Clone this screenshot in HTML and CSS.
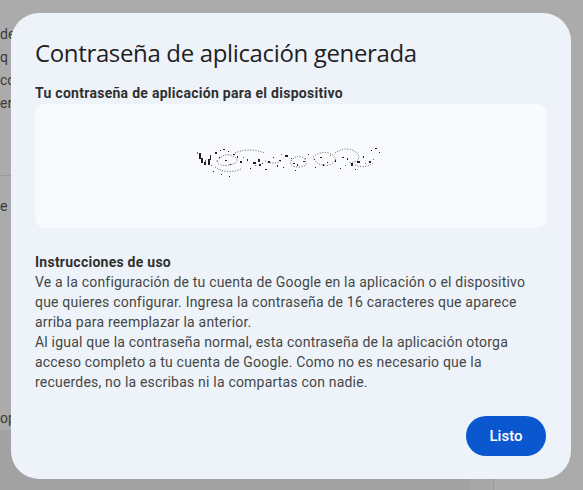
FILE: index.html
```html
<!DOCTYPE html>
<html lang="es">
<head>
<meta charset="utf-8">
<title>Contraseña de aplicación generada</title>
<link rel="stylesheet" href="styles.css">
</head>
<body>
<div class="page">
  <div class="bg-col">
    <p class="bg-line">de</p>
    <p class="bg-line">q</p>
    <p class="bg-line">co</p>
    <p class="bg-line">er</p>
    <div class="bg-divider"></div>
    <p class="bg-line l5">e<span class="mark"></span></p>
    <div class="bg-spacer"></div>
    <p class="bg-line">op</p>
  </div>
  <div class="bg-bottom">
    <div class="bg-b1"></div>
    <div class="bg-b2"></div>
    <div class="bg-b3"></div>
  </div>
</div>

<div class="dialog" role="dialog">
  <h1 class="title">Contraseña de aplicación generada</h1>
  <h2 class="subtitle">Tu contraseña de aplicación para el dispositivo</h2>
  <div class="pw-box">
    <svg class="pw-noise" width="190" height="45" viewBox="0 0 190 45" aria-label="contraseña">
      <g fill="#1f1f1f">
        <rect x="4" y="8" width="2" height="6"/><rect x="6" y="13" width="2" height="5"/><rect x="9" y="17" width="2" height="3"/>
        <rect x="13" y="14" width="2" height="6"/><rect x="15" y="10" width="1" height="5"/><rect x="20" y="7" width="2" height="2"/>
        <rect x="25" y="5" width="1" height="1"/><rect x="28" y="4" width="2" height="1"/><rect x="33" y="6" width="1" height="1"/>
        <rect x="38" y="9" width="2" height="1"/><rect x="42" y="11" width="1" height="2"/><rect x="24" y="12" width="1" height="1"/>
        <rect x="30" y="15" width="2" height="1"/><rect x="35" y="19" width="1" height="1"/><rect x="45" y="16" width="2" height="2"/>
        <rect x="52" y="14" width="1" height="2"/><rect x="58" y="17" width="3" height="2"/><rect x="63" y="14" width="2" height="3"/>
        <rect x="67" y="18" width="1" height="1"/><rect x="73" y="16" width="2" height="2"/><rect x="78" y="12" width="1" height="1"/>
        <rect x="84" y="15" width="2" height="1"/><rect x="90" y="10" width="3" height="2"/><rect x="96" y="13" width="1" height="1"/>
        <rect x="102" y="19" width="1" height="2"/><rect x="108" y="16" width="2" height="1"/><rect x="113" y="9" width="1" height="1"/>
        <rect x="119" y="14" width="1" height="1"/><rect x="125" y="12" width="2" height="1"/><rect x="132" y="17" width="1" height="1"/>
        <rect x="140" y="15" width="1" height="2"/><rect x="147" y="12" width="2" height="1"/><rect x="156" y="18" width="2" height="3"/>
        <rect x="162" y="16" width="3" height="2"/><rect x="168" y="11" width="1" height="2"/><rect x="176" y="5" width="1" height="1"/>
        <rect x="180" y="3" width="2" height="1"/><rect x="184" y="7" width="1" height="1"/><rect x="18" y="26" width="1" height="1"/>
        <rect x="26" y="29" width="1" height="1"/><rect x="34" y="31" width="1" height="1"/><rect x="55" y="23" width="1" height="1"/>
        <rect x="70" y="24" width="2" height="1"/><rect x="88" y="22" width="1" height="1"/><rect x="100" y="25" width="1" height="1"/>
        <rect x="120" y="22" width="1" height="1"/><rect x="145" y="23" width="1" height="1"/><rect x="160" y="24" width="1" height="1"/>
        <rect x="64" y="19" width="2" height="2"/><rect x="82" y="20" width="1" height="2"/><rect x="98" y="18" width="2" height="1"/>
        <rect x="128" y="19" width="1" height="2"/><rect x="152" y="13" width="1" height="2"/><rect x="174" y="16" width="2" height="2"/>
      </g>
      <g fill="#a06010">
        <rect x="2" y="7" width="1" height="2"/><rect x="10" y="15" width="1" height="2"/><rect x="48" y="12" width="1" height="1"/>
        <rect x="86" y="9" width="1" height="1"/><rect x="135" y="10" width="1" height="1"/><rect x="170" y="18" width="1" height="1"/>
      </g>
      <g fill="#2a7fd0">
        <rect x="16" y="20" width="1" height="1"/><rect x="60" y="20" width="1" height="1"/><rect x="110" y="13" width="1" height="1"/>
        <rect x="150" y="20" width="1" height="1"/><rect x="178" y="14" width="1" height="1"/>
      </g>
      <g fill="none" stroke="#444" stroke-width="0.9" stroke-dasharray="1 1.6">
        <path d="M22 16 q8 -10 18 -4 q6 6 -6 8 q-10 2 -12 -4"/>
        <path d="M40 8 q14 -6 30 0"/>
        <path d="M20 22 q12 8 26 2"/>
        <path d="M96 16 q6 -8 14 -2 q4 8 -6 8 q-10 0 -8 -6"/>
        <path d="M118 12 q10 -8 20 -2 q6 6 -4 10 q-12 2 -16 -8"/>
        <path d="M140 8 q12 -8 22 0 q6 8 -8 10"/>
        <path d="M160 20 q10 4 18 -2"/>
        <path d="M70 16 q8 4 16 0"/>
      </g>
    </svg>
  </div>
  <h3 class="inst-title">Instrucciones de uso</h3>
  <p class="inst-text">Ve a la configuración de tu cuenta de Google en la aplicación o el dispositivo que quieres configurar. Ingresa la contraseña de 16 caracteres que aparece arriba para reemplazar la anterior.<br>Al igual que la contraseña normal, esta contraseña de la aplicación otorga acceso completo a tu cuenta de Google. Como no es necesario que la recuerdes, no la escribas ni la compartas con nadie.</p>
  <div class="actions">
    <button class="btn-primary" type="button">Listo</button>
  </div>
</div>
</body>
</html>
```

FILE: styles.css
```css
* { box-sizing: border-box; }
html, body {
  margin: 0;
  padding: 0;
  width: 583px;
  height: 490px;
  overflow: hidden;
  background: #ababab;
  font-family: Roboto, "Liberation Sans", Arial, sans-serif;
}
.page {
  position: relative;
  width: 583px;
  height: 490px;
  display: flex;
  flex-direction: column;
}
.bg-col {
  width: 40px;
  height: 430px;
  background: #ababab;
  display: flex;
  flex-direction: column;
  padding-top: 23px;
}
.bg-line {
  margin: 0;
  font-size: 14px;
  line-height: 23px;
  color: #3a3a3a;
  white-space: nowrap;
}
.bg-divider {
  height: 1px;
  background: #9c9c9c;
  margin-top: 60px;
}
.l5 { margin-top: 19px; }
.mark {
  display: inline-block;
  width: 2px;
  height: 14px;
  background: #b89a5a;
  margin-left: 4px;
  vertical-align: -2px;
}
.bg-spacer { height: 196px; }
.bg-bottom {
  flex: 1;
  display: flex;
}
.bg-b1 { width: 470px; background: #a2a2a2; }
.bg-b2 { width: 24px; background: #a8a8a8; border-right: 1px solid #999; }
.bg-b3 { flex: 1; background: #ababab; }

.dialog {
  position: absolute;
  left: 11px;
  top: 13px;
  width: 560px;
  height: 466px;
  background: #eef3fa;
  border-radius: 28px;
  padding: 24px 24px 23px;
  display: flex;
  flex-direction: column;
  color: #1f1f1f;
}
.title {
  margin: 0;
  font-family: "Open Sans", Roboto, sans-serif;
  font-weight: 400;
  font-size: 24px;
  line-height: 32px;
  color: #1f1f1f;
  letter-spacing: -0.35px;
}
.subtitle {
  margin: 14px 0 0;
  font-size: 14px;
  font-weight: 700;
  line-height: 20px;
  color: #303030;
  letter-spacing: 0.28px;
}
.pw-box {
  margin-top: 1px;
  height: 124px;
  background: #f8fafd;
  border-radius: 10px;
  display: flex;
  align-items: center;
  justify-content: center;
}
.pw-noise { display: block; margin-left: -2px; margin-top: 2px; }
.inst-title {
  margin: 24px 0 0;
  font-size: 14px;
  font-weight: 700;
  line-height: 20px;
  color: #303030;
  letter-spacing: 0.25px;
}
.inst-text {
  margin: 0;
  font-size: 14px;
  line-height: 20px;
  color: #444746;
  letter-spacing: 0.2px;
}
.actions {
  margin-top: auto;
  display: flex;
  justify-content: flex-end;
  padding-right: 1px;
}
.btn-primary {
  width: 80px;
  height: 40px;
  border: none;
  border-radius: 20px;
  background: #0b57d0;
  color: #fff;
  font-family: Roboto, sans-serif;
  font-size: 15px;
  font-weight: 500;
  cursor: pointer;
}
```
